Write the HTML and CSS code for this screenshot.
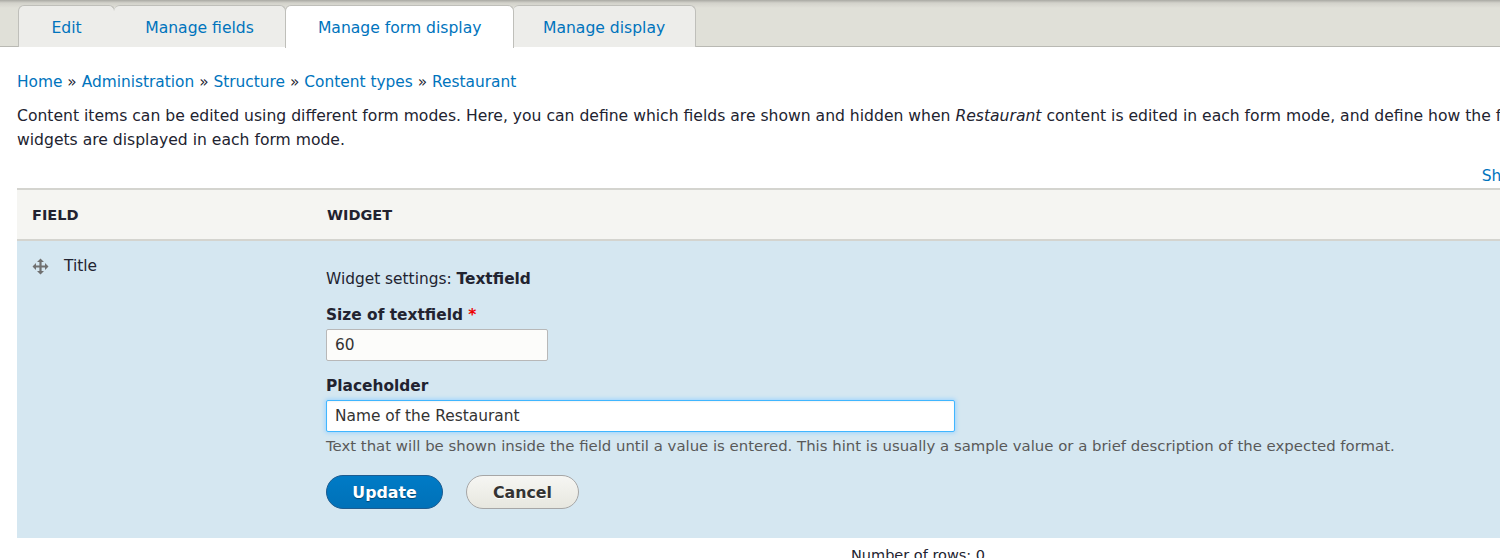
FILE: index.html
```html
<!DOCTYPE html>
<html>
<head>
<meta charset="utf-8">
<link rel="stylesheet" href="styles.css">
</head>
<body>
<header class="header">
  <ul class="tabs">
    <li class="tab tab-edit"><a>Edit</a></li>
    <li class="tab"><a>Manage fields</a></li>
    <li class="tab active"><a>Manage form display</a></li>
    <li class="tab tab-display"><a>Manage display</a></li>
  </ul>
</header>
<main class="page">
  <nav class="breadcrumb"><a>Home</a> » <a>Administration</a> » <a>Structure</a> » <a>Content types</a> » <a>Restaurant</a></nav>
  <p class="intro">Content items can be edited using different form modes. Here, you can define which fields are shown and hidden when <em>Restaurant</em> content is edited in each form mode, and define how the field widgets are displayed in each form mode.</p>
  <div class="weights"><a>Show row weights</a></div>
  <table class="fields">
    <thead>
      <tr><th class="col-field">Field</th><th>Widget</th></tr>
    </thead>
    <tbody>
      <tr class="row">
        <td class="col-field">
          <div class="field-name">
            <svg class="drag" width="17" height="17" viewBox="0 0 17 17"><path d="M8.5 0.5 L12 4 H9.6 V7.4 H13 V5 L16.5 8.5 L13 12 V9.6 H9.6 V13 H12 L8.5 16.5 L5 13 H7.4 V9.6 H4 V12 L0.5 8.5 L4 5 V7.4 H7.4 V4 H5 Z" fill="#707070"/></svg>
            <span>Title</span>
          </div>
        </td>
        <td class="col-widget">
          <div class="settings-title">Widget settings: <strong>Textfield</strong></div>
          <div class="form-item">
            <label>Size of textfield <span class="req">*</span></label>
            <input class="input small" type="text" value="60">
          </div>
          <div class="form-item">
            <label>Placeholder</label>
            <input class="input wide focus" type="text" value="Name of the Restaurant">
            <div class="desc">Text that will be shown inside the field until a value is entered. This hint is usually a sample value or a brief description of the expected format.</div>
          </div>
          <div class="actions">
            <button class="btn primary">Update</button>
            <button class="btn">Cancel</button>
          </div>
        </td>
      </tr>
    </tbody>
  </table>
  <div class="rows-count">Number of rows: 0</div>
</main>
</body>
</html>
```

FILE: styles.css
```css
html, body {
  margin: 0;
  padding: 0;
  overflow: hidden;
}
body {
  font-family: "DejaVu Sans", "Liberation Sans", sans-serif;
  font-size: 15.4px;
  color: #222330;
  background: #fff;
  width: 1660px;
}
a { color: #0074bd; text-decoration: none; }

.header {
  background: linear-gradient(to bottom, #a9a9a3 0, #d3d2cb 3px, #e0e0d8 8px, #e0e0d8 100%);
  border-bottom: 1px solid #b9b9b3;
  height: 47px;
  padding: 0 0 0 18px;
  box-sizing: border-box;
}
.tabs {
  list-style: none;
  margin: 0;
  padding: 5px 0 0 0;
  display: flex;
  height: 100%;
  box-sizing: border-box;
}
.tab {
  background: #ededea;
  border: 1px solid #bfbfba;
  border-bottom: none;
  border-left: none;
  border-radius: 6px 6px 0 0;
  margin-right: -1px;
  display: flex;
  align-items: center;
  padding: 0 31px;
  height: 42px;
  box-sizing: border-box;
  font-size: 15.6px;
}
.tab:first-child { border-left: 1px solid #bfbfba; }
.tab.tab-edit { padding: 0 32.5px; }
.tab.tab-display { padding: 0 29.5px; }
.tab a { color: #0074bd; padding-top: 2px; }
.tab.active {
  background: #fff;
  height: 43px;
  margin-bottom: -1px;
  padding: 0 32px;
  border-left: 1px solid #bfbfba;
  position: relative;
  z-index: 1;
}
.tab.active + .tab { border-left: none; }

.page {
  padding: 0 17px;
  width: 1605px;
}
.breadcrumb {
  font-size: 15.4px;
  margin-top: 25px;
  line-height: 20px;
  color: #222330;
}
.intro {
  font-size: 15.6px;
  line-height: 24px;
  margin: 12px 0 0 0;
  max-width: 1550px;
}
.weights {
  text-align: right;
  font-size: 15.5px;
  margin-top: 14px;
  line-height: 20px;
}
.fields {
  width: 100%;
  border-collapse: collapse;
  margin-top: 2px;
}
.fields thead th {
  background: #f5f5f2;
  border-top: 2px solid #d4d4cf;
  border-bottom: 2px solid #d4d4cf;
  text-align: left;
  text-transform: uppercase;
  font-size: 14.5px;
  font-weight: bold;
  color: #222330;
  height: 51px;
  padding: 0 16px;
  box-sizing: border-box;
}
.fields th.col-field { width: 294px; padding-left: 15px; }
.row td {
  background: #d5e7f1;
  vertical-align: top;
}
.row td.col-field { padding: 16px 15px; }
.field-name {
  display: flex;
  align-items: center;
  gap: 15px;
  font-size: 15.4px;
}
.col-widget { padding: 28px 16px 29px 15px; }
.settings-title { line-height: 20px; }
.settings-title strong { font-weight: bold; }
.form-item { margin-top: 16px; }
.form-item + .form-item { margin-top: 15px; }
.form-item label {
  display: block;
  font-weight: bold;
  line-height: 20px;
  margin-bottom: 4px;
}
.req { color: #e00; }
.input {
  font-family: inherit;
  font-size: 15.4px;
  color: #333;
  border: 1px solid #b8b8b8;
  border-radius: 2px;
  height: 32px;
  padding: 0 8px;
  box-sizing: border-box;
  display: block;
  margin: 0;
}
.input.small { width: 222px; background: #fcfcfa; }
.input.wide {
  width: 629px;
  background: #fff;
  border-color: #40b6ff;
  box-shadow: 0 0 4px 1px #9bd3ff, inset 0 1px 2px rgba(0,0,0,0.05);
}
.desc {
  color: #595959;
  font-size: 14.9px;
  line-height: 20px;
  margin-top: 4px;
}
.actions {
  display: flex;
  gap: 23px;
  margin-top: 19px;
}
.btn {
  font-family: inherit;
  font-weight: bold;
  font-size: 15.8px;
  height: 34px;
  border-radius: 20px;
  border: 1px solid #a6a6a6;
  background: linear-gradient(to bottom, #f6f6f3, #e7e7df);
  color: #333;
  padding: 0;
  width: 113px;
  text-shadow: 0 1px #fff;
}
.btn.primary {
  width: 117px;
  background: linear-gradient(to bottom, #007bc6, #0071b8);
  border-color: #1e5c90;
  color: #fff;
  text-shadow: 0 1px 1px rgba(0,0,0,0.4);
}
.rows-count {
  margin-top: 9px;
  padding-left: 834px;
  font-size: 14.5px;
}
```
